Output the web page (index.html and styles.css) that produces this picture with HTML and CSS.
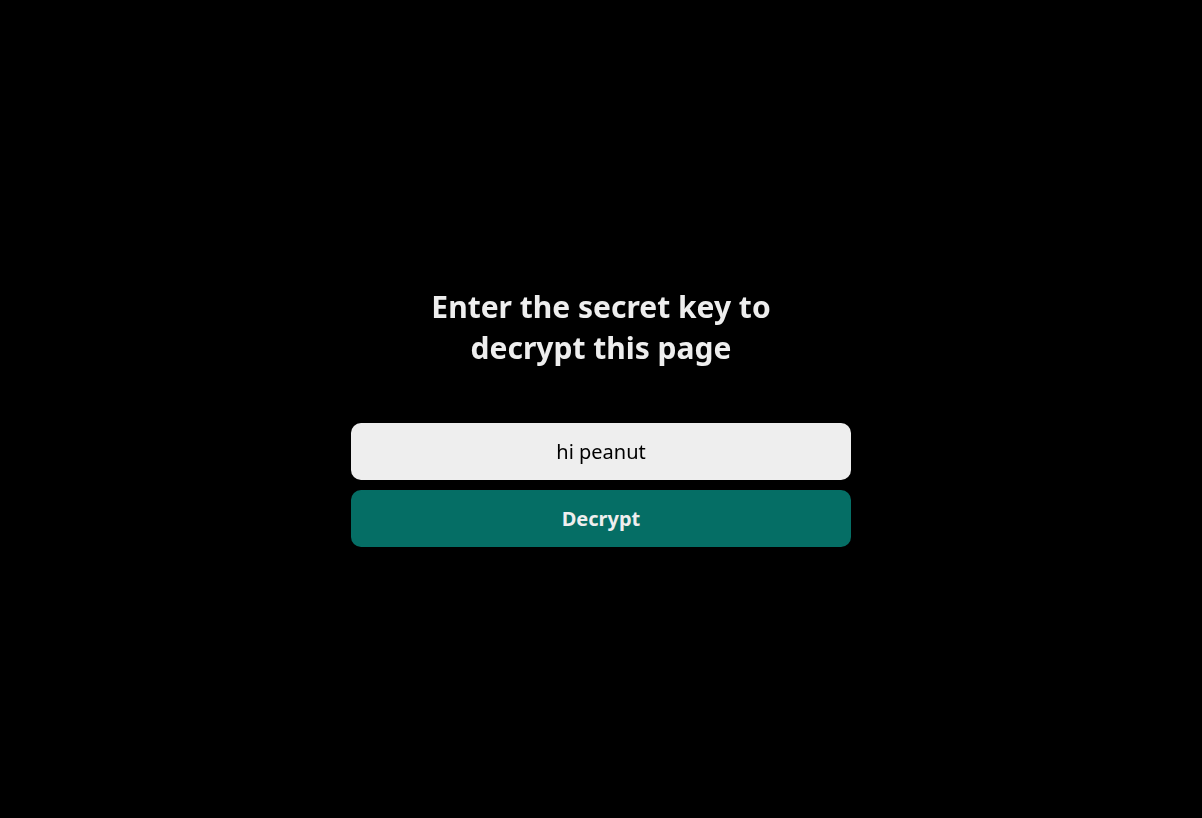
FILE: index.html
```html
<!DOCTYPE html>
<html lang="en">
<head>
<meta charset="utf-8">
<title>Decrypt</title>
<link rel="stylesheet" href="styles.css">
</head>
<body>
<main class="page">
<form class="unlock">
<h1 class="title">Enter the secret key to decrypt this page</h1>
<input class="field" type="text" value="hi peanut" aria-label="Secret key">
<button class="submit" type="button">Decrypt</button>
</form>
</main>
</body>
</html>
```
FILE: styles.css
```css
* {
  box-sizing: border-box;
}

body {
  margin: 0;
  background: #000;
  color: #eee;
  font-family: "Noto Sans", sans-serif;
}

.page {
  height: 100vh;
  display: flex;
  justify-content: center;
  padding-top: 286px;
}

.unlock {
  width: 500px;
  display: flex;
  flex-direction: column;
  align-items: center;
  will-change: opacity;
}

.title {
  width: 400px;
  margin: 0 0 55px;
  font-size: 30px;
  line-height: 41px;
  font-weight: 700;
  text-align: center;
}

.field,
.submit {
  width: 100%;
  height: 57px;
  padding: 15px;
  border: 0;
  border-radius: 10px;
  font-family: inherit;
  font-size: 20px;
  line-height: 27px;
  text-align: center;
}

.field {
  margin: 0 0 10px;
  background: #eee;
  color: #000;
}

.submit {
  background: #056e65;
  color: #eee;
  font-weight: 700;
}
```
